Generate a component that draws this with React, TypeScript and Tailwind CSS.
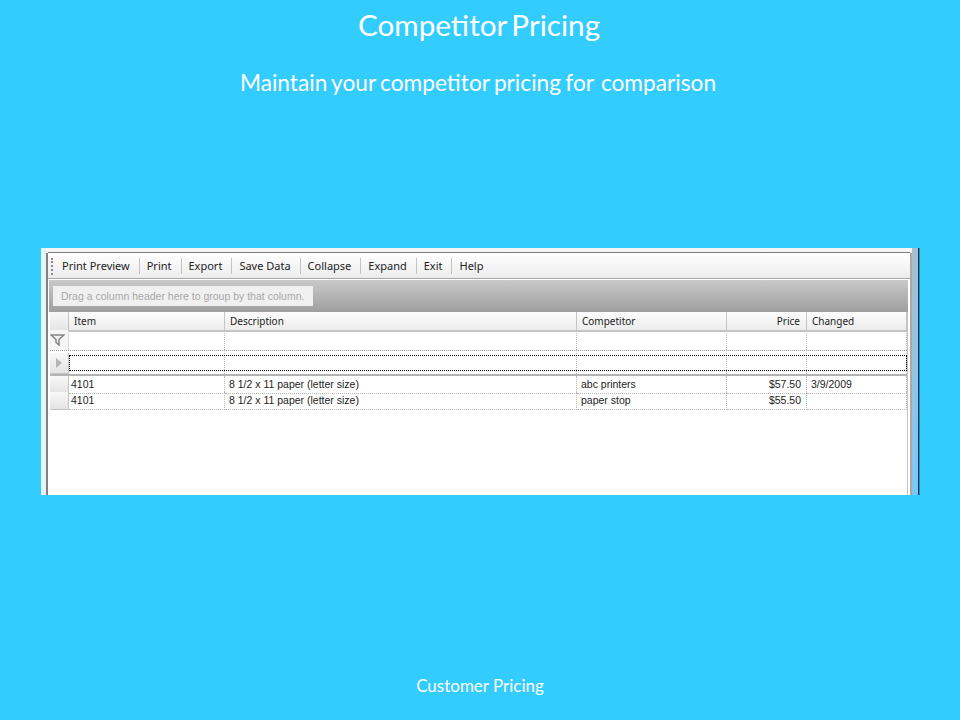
const columns = [
  { label: 'Item', align: 'left' },
  { label: 'Description', align: 'left' },
  { label: 'Competitor', align: 'left' },
  { label: 'Price', align: 'right' },
  { label: 'Changed', align: 'left' },
];

const rows = [
  ['4101', '8 1/2 x 11 paper (letter size)', 'abc printers', '$57.50', '3/9/2009'],
  ['4101', '8 1/2 x 11 paper (letter size)', 'paper stop', '$55.50', ''],
];

const toolbar = ['Print Preview', 'Print', 'Export', 'Save Data', 'Collapse', 'Expand', 'Exit', 'Help'];

const gridCols = 'grid grid-cols-[19px_156px_352px_150px_80px_100px]';

function FilterIcon() {
  return (
    <svg width="15" height="12" viewBox="0 0 15 12" fill="none">
      <path d="M1 1h13L9 5.5v5.5L6 8.5v-3z" fill="#f4f4f4" stroke="#858585" strokeWidth="1.5" />
    </svg>
  );
}

function RowHeader({ children }: { children?: React.ReactNode }) {
  return (
    <div className="flex items-center justify-center bg-gradient-to-b from-[#f8f8f8] to-[#e4e4e4] border-r border-b border-[#c4c4c4]">
      {children}
    </div>
  );
}

export default function App() {
  return (
    <div className="w-[960px] h-[720px] bg-[#33ccff] flex flex-col text-white font-['Lato',sans-serif] overflow-hidden">
      <h1 className="text-center text-[29.7px] leading-[36px] mt-[7px] pr-[2px] [word-spacing:-3px]">Competitor Pricing</h1>
      <p className="text-center text-[22.7px] leading-[28px] mt-[26px] pr-[4px] [word-spacing:-1.5px]">
        Maintain your competitor pricing for <span className="ml-[3px]">comparison</span>
      </p>

      {/* grid window */}
      <div className="mt-[151px] ml-[41px] w-[879px] h-[247px] flex bg-[#f4f4f6] text-[#222] font-['Liberation_Sans',sans-serif]">
        <div className="w-[5px] bg-[#e6f4fa]" />
        <div className="w-[2px] bg-[#808080] mt-[5px]" />
        <div className="flex-1 flex flex-col bg-white">
          <div className="h-[4px] bg-[#f4f4f4]" />
          <div className="h-[1px] bg-[#7d7d7d]" />

          {/* toolbar */}
          <div className="h-[26px] flex items-center bg-gradient-to-b from-[#ffffff] to-[#ececec] border-b border-[#a9a9a9] text-[11px] pl-[3px] pt-[1px] font-['Noto_Sans',sans-serif]">
            <div className="h-[17px] border-l-2 border-dotted border-[#8a8a8a] mr-[9px]" />
            {toolbar.map((label, i) => (
              <span key={label} className={i === 0 ? 'pr-[9px]' : 'pl-[7px] pr-[9px] border-l border-[#c2c2c2]'}>
                {label}
              </span>
            ))}
          </div>

          {/* group panel */}
          <div className="w-[859px] ml-[1px] mt-[1px] h-[32px] flex items-center pl-[4px] bg-gradient-to-b from-[#c9c9c9] to-[#9f9f9f]">
            <div className="h-[20px] w-[260px] bg-[#f0f0f0] text-[#a8a8a8] text-[10.5px] leading-[20px] pl-[8px]">
              Drag a column header here to group by that column.
            </div>
          </div>

          <div className="w-[858px] ml-[2px] border-r border-[#c4c4c4] flex-1">
            {/* headers */}
            <div className={`${gridCols} h-[18px] text-[10px] font-['Noto_Sans',sans-serif]`}>
              <RowHeader />
              {columns.map((col) => (
                <div
                  key={col.label}
                  className={`pl-[5px] pr-[6px] leading-[18px] bg-gradient-to-b from-[#fdfdfd] to-[#ececec] border-r border-b-2 border-[#c4c4c4] ${col.align === 'right' ? 'text-right' : ''}`}
                >
                  {col.label}
                </div>
              ))}
            </div>

            {/* filter row */}
            <div className={`${gridCols} h-[21px] border-b border-dotted border-[#999]`}>
              <div className="flex items-center justify-start bg-[#f6f6f6] border-r border-[#d8d8d8]">
                <FilterIcon />
              </div>
              {columns.map((col) => (
                <div key={col.label} className="border-r border-dotted border-[#bbb]" />
              ))}
            </div>

            {/* new row */}
            <div className={`${gridCols} h-[21px] mt-[2px] relative`}>
              <RowHeader>
                <span className="border-l-[6px] border-y-[5px] border-l-[#b5b5b5] border-y-transparent" />
              </RowHeader>
              {columns.map((col) => (
                <div key={col.label} className="border-r border-dotted border-[#bbb]" />
              ))}
              <div className="absolute left-[19px] right-0 top-[2px] bottom-[3px] border border-dotted border-black" />
            </div>
            <div className="h-[2px] bg-[#b4b4b4]" />

            {/* data rows */}
            {rows.map((row, r) => (
              <div key={r} className={`${gridCols} h-[16px] text-[10.5px] leading-[17px]`}>
                <RowHeader />
                {row.map((cell, c) => (
                  <div
                    key={c}
                    className={`border-r border-b border-dotted border-[#b8b8b8] ${c === 0 ? 'pl-[2px]' : 'pl-[4px]'} ${c === 3 ? 'text-right pr-[5px]' : ''}`}
                  >
                    {cell}
                  </div>
                ))}
              </div>
            ))}
          </div>
        </div>
        <div className="w-[2px] bg-[#a9a9a9] mt-[5px]" />
        <div className="w-[6px] bg-gradient-to-b from-[#a9bccc] to-[#7cc8f8]" />
        <div className="w-[1px] bg-[#123a55]" />
        <div className="w-[1px] bg-[#1f8fc0]" />
      </div>

      <p className="text-center text-[17px] leading-[22px] mt-[180px]">Customer Pricing</p>
    </div>
  );
}
